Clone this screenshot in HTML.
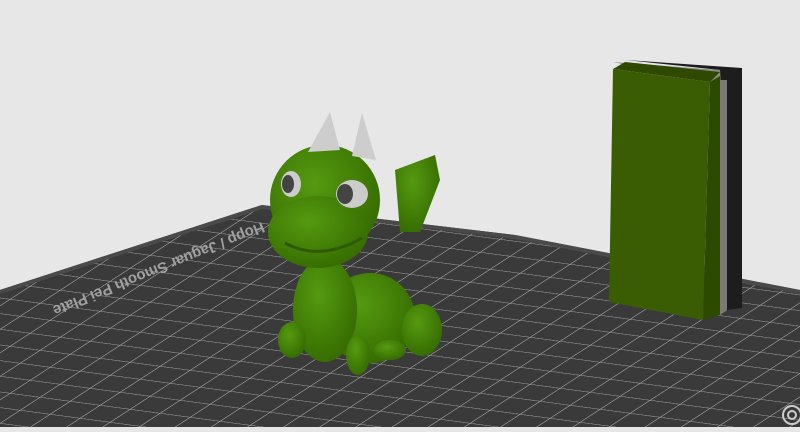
<!DOCTYPE html>
<html><head><style>html,body{margin:0;padding:0;background:#e7e7e7;overflow:hidden}</style></head>
<body>
<svg width="800" height="427" viewBox="0 0 800 427" xmlns="http://www.w3.org/2000/svg">
<defs>
<pattern id="g" width="20" height="20" patternUnits="userSpaceOnUse" patternTransform="matrix(1.5,0.2,-1.0,0.65,0,0)">
<rect width="20" height="20" fill="#3a3a3a"/>
<path d="M0 0H20M0 0V20" stroke="#a5a5a5" stroke-width="1.2" fill="none"/>
</pattern>
<radialGradient id="gr" cx="0.4" cy="0.35" r="0.7"><stop offset="0" stop-color="#559a10"/><stop offset="1" stop-color="#356a00"/></radialGradient>
</defs>
<rect width="800" height="427" fill="#e7e7e7"/>
<polygon points="0,290 262,205 515,235 800,290 800,427 0,427" fill="url(#g)"/>
<polyline points="0,292 262,207 515,237 800,292" stroke="#4a4a4a" stroke-width="4" fill="none"/>
<text transform="translate(262,222) rotate(158)" fill="#a0a0a0" font-family="Liberation Sans, sans-serif" font-size="15" font-weight="bold">Hopp / Jaguar Smooth Pei Plate</text>
<circle cx="792" cy="415" r="9" fill="none" stroke="#ccc" stroke-width="2"/>
<circle cx="792" cy="415" r="4" fill="none" stroke="#ccc" stroke-width="2"/>
<polygon points="625,60 742,68 742,308 727,310 720,70" fill="#1d1d1d"/>
<polygon points="613,62 720,70 727,310 720,315 710,82" fill="#8a8a8a"/>
<polygon points="720,80 727,80 727,310 720,315" fill="#7a7a7a"/>
<polygon points="613,69 625,62 720,72 710,82" fill="#2f4a00"/>
<polygon points="710,82 720,76 720,315 703,320" fill="#2c4b00"/>
<polygon points="613,69 710,82 703,320 609,302" fill="#3a5c02"/>
<g fill="url(#gr)">
<ellipse cx="370" cy="318" rx="45" ry="45"/>
<ellipse cx="325" cy="310" rx="32" ry="52"/>
<ellipse cx="422" cy="330" rx="20" ry="26"/>
<ellipse cx="292" cy="340" rx="14" ry="18"/>
<ellipse cx="358" cy="355" rx="12" ry="20"/>
<ellipse cx="390" cy="350" rx="16" ry="10"/>
<polygon points="395,170 435,155 440,180 420,232 400,232"/>
<ellipse cx="325" cy="200" rx="55" ry="55"/>
<ellipse cx="318" cy="232" rx="50" ry="36"/>
</g>
<path d="M285 243 Q320 262 362 238" stroke="#2d5a00" stroke-width="3" fill="none"/>
<polygon points="308,152 330,112 340,150" fill="#cdcdcd"/>
<polygon points="352,156 362,113 376,160" fill="#cdcdcd"/>
<ellipse cx="291" cy="184" rx="10" ry="13" fill="#ccc"/>
<ellipse cx="288" cy="184" rx="6" ry="9" fill="#444"/>
<ellipse cx="352" cy="194" rx="16" ry="14" fill="#ccc"/>
<ellipse cx="345" cy="194" rx="8" ry="10" fill="#444"/>
</svg>
</body></html>
